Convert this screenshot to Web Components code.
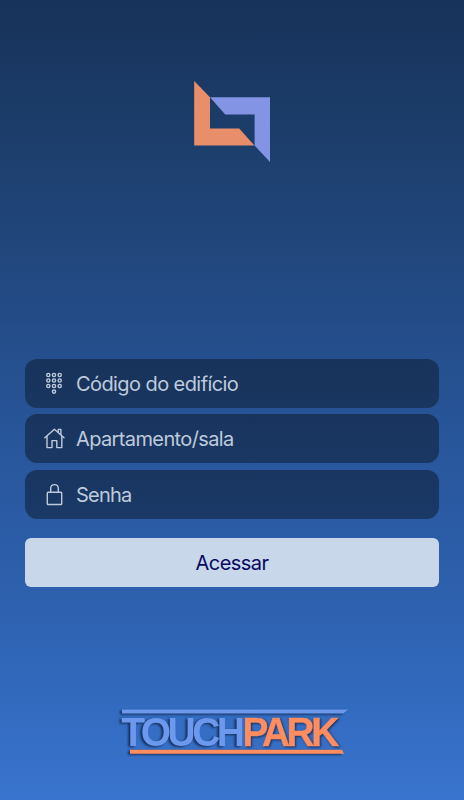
<!DOCTYPE html>
<html lang="pt-BR">
<head>
<meta charset="utf-8">
<title>TouchPark</title>
<style>
  html, body { margin: 0; height: 100%; }
  body { font-family: Inter, "Liberation Sans", sans-serif; }
</style>
</head>
<body>
<login-screen>
  <brand-mark slot="brand"></brand-mark>
  <login-field icon="keypad" style="--spacing: -0.58px">Código do edifício</login-field>
  <login-field icon="home" style="--spacing: -0.62px">Apartamento/sala</login-field>
  <login-field icon="lock" style="--spacing: -0.75px">Senha</login-field>
  <login-button>Acessar</login-button>
  <touchpark-logo slot="footer"></touchpark-logo>
</login-screen>

<script>
class LoginScreen extends HTMLElement {
  constructor() {
    super();
    this.attachShadow({ mode: 'open' });
  }

  connectedCallback() {
    this.shadowRoot.innerHTML = `
      <style>
        :host {
          display: flex;
          flex-direction: column;
          box-sizing: border-box;
          height: 800px;
          background: linear-gradient(#17325a 0%, #1c3d6a 16%, #234b85 38%, #28569b 55%, #2d5fac 73%, #326abe 87%, #3974ce 100%);
        }
        header {
          display: flex;
          justify-content: center;
          height: 277.7px;
          padding-top: 81px;
        }
        main {
          display: flex;
          flex-direction: column;
          gap: 6.4px;
          padding: 0 24.7px;
        }
        footer {
          display: flex;
          justify-content: center;
          padding-top: 117px;
        }
      </style>
      <header><slot name="brand"></slot></header>
      <main><slot></slot></main>
      <footer><slot name="footer"></slot></footer>
    `;
  }
}

class BrandMark extends HTMLElement {
  constructor() {
    super();
    this.attachShadow({ mode: 'open' });
  }

  connectedCallback() {
    this.shadowRoot.innerHTML = `
      <style>
        :host { display: block; }
        svg { display: block; }
      </style>
      <svg width="76" height="81" viewBox="0 0 76 81">
        <path fill="#e98e6b" d="M0.2 0 L16 16.3 V47.4 H45.2 L60.4 64.5 H0.2 Z"/>
        <path fill="#8394e5" d="M16 16.2 H76 V81 L60.6 64.5 V33.4 H31.2 Z"/>
      </svg>
    `;
  }
}

const ICONS = {
  keypad: `
    <circle cx="4.3" cy="3" r="1.6"/><circle cx="10" cy="3" r="1.6"/><circle cx="15.7" cy="3" r="1.6"/>
    <circle cx="4.3" cy="8.5" r="1.6"/><circle cx="10" cy="8.5" r="1.6"/><circle cx="15.7" cy="8.5" r="1.6"/>
    <circle cx="4.3" cy="14" r="1.6"/><circle cx="10" cy="14" r="1.6"/><circle cx="15.7" cy="14" r="1.6"/>
    <circle cx="10" cy="19.6" r="1.6"/>`,
  home: `
    <path d="M0.8 10.8 L10.4 2.2 L20 10.8"/>
    <path d="M3 9.4 V20.6 H8 V13.6 H12.8 V20.6 H17.8 V9.4"/>
    <path d="M14.3 5 V2.4 H16.9 V7.6"/>`,
  lock: `
    <rect x="3.3" y="9.3" width="14.4" height="12.2" rx="0.8"/>
    <path d="M6.7 9.2 V5.6 C6.7 3.1 8.2 1.6 10.5 1.6 S14.3 3.1 14.3 5.6 V9.2"/>`
};

class LoginField extends HTMLElement {
  constructor() {
    super();
    this.attachShadow({ mode: 'open' });
  }

  connectedCallback() {
    this.shadowRoot.innerHTML = `
      <style>
        :host {
          display: flex;
          align-items: center;
          gap: 10px;
          box-sizing: border-box;
          height: 49.2px;
          padding-left: 19.3px;
          border-radius: 12px;
          background: linear-gradient(rgba(15, 31, 56, .6), rgba(15, 33, 58, .58));
          color: #bfcbdc;
          font-size: 20px;
          line-height: 24px;
          letter-spacing: var(--spacing, 0);
        }
        svg {
          fill: none;
          stroke: #bfcbdc;
          stroke-width: 1.4;
          stroke-linejoin: round;
          stroke-linecap: round;
        }
        span { padding-top: 1px; }
      </style>
      <svg width="22" height="23" viewBox="0 0 22 23">${ICONS[this.getAttribute('icon')]}</svg>
      <span><slot></slot></span>
    `;
  }
}

class LoginButton extends HTMLElement {
  constructor() {
    super();
    this.attachShadow({ mode: 'open' });
  }

  connectedCallback() {
    this.shadowRoot.innerHTML = `
      <style>
        :host { display: block; margin-top: 12.3px; }
        button {
          display: block;
          width: 100%;
          height: 49.4px;
          padding: 1px 0 0;
          border: 0;
          border-radius: 6px;
          background: #c8d7e9;
          color: #080861;
          font: inherit;
          font-size: 20px;
          line-height: 24px;
          letter-spacing: -0.55px;
        }
      </style>
      <button type="button"><slot></slot></button>
    `;
  }
}

class TouchparkLogo extends HTMLElement {
  constructor() {
    super();
    this.attachShadow({ mode: 'open' });
  }

  connectedCallback() {
    this.shadowRoot.innerHTML = `
      <style>
        :host { display: block; }
        svg {
          display: block;
          overflow: visible;
        }
        .blue { fill: #6c98ed; }
        .orange { fill: #ff8d60; }
        .left { filter: drop-shadow(-1.5px 1.5px 1px rgba(10, 25, 55, .75)); }
        .right { filter: drop-shadow(1px 1.5px 1px rgba(10, 25, 55, .75)); }
        text {
          font-family: "Liberation Sans", Arial, sans-serif;
          font-weight: bold;
          font-size: 41px;
          letter-spacing: -3.7px;
        }
        text.orange { stroke: #ff8d60; stroke-width: .4; }
      </style>
      <svg width="232" height="54" viewBox="116 704 232 54">
        <g class="left">
          <path class="blue" d="M122 709.5 H348 L343.5 713.5 H122 Z"/>
          <text class="blue" transform="translate(121.2 745.8) scale(.95 1)">TOUCH</text>
          <path class="orange" d="M130 749.7 H342 L344 753.7 H130 Z"/>
        </g>
        <g class="right">
          <text class="orange" transform="translate(242.4 745.8) scale(.95 1)">PARK</text>
        </g>
      </svg>
    `;
  }
}

customElements.define('login-screen', LoginScreen);
customElements.define('brand-mark', BrandMark);
customElements.define('login-field', LoginField);
customElements.define('login-button', LoginButton);
customElements.define('touchpark-logo', TouchparkLogo);
</script>
</body>
</html>
